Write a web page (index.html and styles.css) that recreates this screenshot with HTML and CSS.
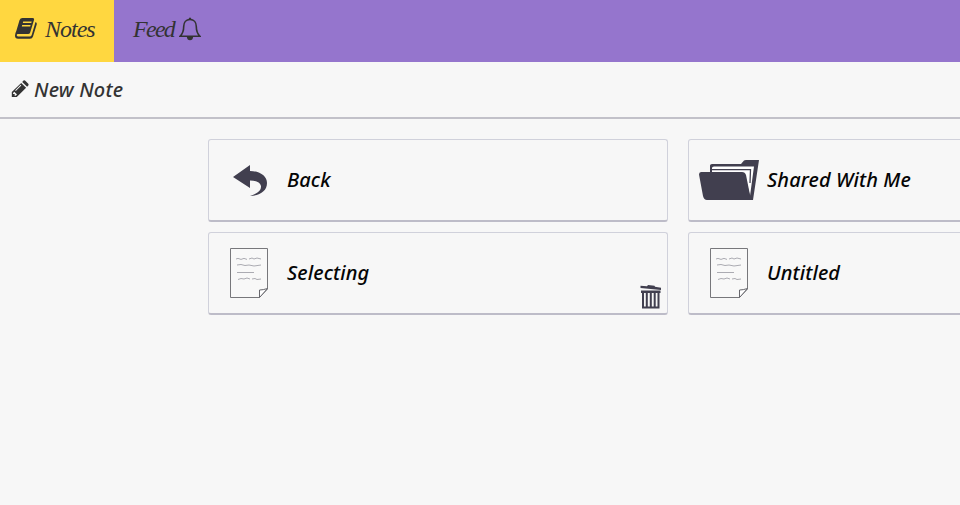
FILE: index.html
```html
<!DOCTYPE html>
<html lang="en">
<head>
<meta charset="utf-8">
<title>Notes</title>
<link rel="stylesheet" href="styles.css">
</head>
<body>
<svg class="defs" width="0" height="0">
  <symbol id="doc" viewBox="0 0 38 50">
    <path d="M.5.5H37.5V41L29.5 49.5H.5Z" fill="#f8f8f8" stroke="#77777b"/>
    <path d="M29.5 49.5V42Q33 42 37.5 40.5Z" fill="#fff" stroke="#66666c"/>
    <path d="M6 11l2-.6 3 1 3-1 3 1M19 11l3-1 2 1 3-1 4 1M7 17l4-.5 4 1 4-.5 5 1 7-1M7 24.500h17M8 31.500l3-1 3 .5 3-1 3 1M22 31l3-.5 2 1 4-.5" fill="none" stroke="#a2a2a9" stroke-width=".9"/>
  </symbol>
</svg>
<nav class="nav">
  <a class="tab tab-active">
    <svg class="book" width="22" height="21" viewBox="0 0 22 21">
      <path fill-rule="evenodd" d="M7.500 0H17.500Q19.500 0 19 2L15.200 14.500Q14.700 16 13 16H3Q1.700 16 1.700 17T3 18.500H14.500Q16.200 18.500 16.700 17L20.500 4Q22.200 4.800 21.700 6.500L18 18.500Q17.300 20.700 15 20.700H3Q0 20.700 0 17.500Q0 15.500 1.300 13L4.500 2.200Q5.300 0 7.500 0ZM8.200 3.500 7.800 5H16.300L16.700 3.500ZM7.200 7 6.800 8.500H15.200L15.600 7Z"/>
    </svg>
    <span class="label label-notes">Notes</span>
  </a>
  <a class="tab">
    <span class="label label-feed">Feed</span>
    <svg class="bell" width="22" height="24" viewBox="0 0 22 24">
      <path d="M11 2.500C7 2.500 4.700 5.500 4.700 9.500C4.700 14.500 3.500 17 1 19.300H21C18.500 17 17.300 14.500 17.300 9.500C17.300 5.500 15 2.500 11 2.500Z" fill="none" stroke="#333" stroke-width="1.600"/>
      <path d="M9.800 2.500V1.200Q11-.4 12.200 1.200V2.500ZM7.800 19.800H14.200Q13.800 23.300 11 23.300T7.800 19.800Z"/>
    </svg>
  </a>
</nav>
<div class="toolbar">
  <svg class="pencil" width="18" height="18" viewBox="0 0 18 18">
    <path fill-rule="evenodd" d="M10.200 2.900 15.100 7.800 5.800 17.100H.800V12.100ZM2.300 12.800 1.900 14.100H3.700V16L5 15.600 6 14.600 3.300 11.800ZM9.700 4.800 4.200 10.300 4.800 10.900 10.300 5.400ZM11.200 1.900 12.500.600Q13.500 0 14.300.700L17.300 3.700Q18 4.600 17.300 5.500L16.100 6.800Z"/>
  </svg>
  <span>New Note</span>
</div>
<main class="grid">
  <article class="card">
    <div class="thumb"><svg class="arrow" width="34" height="31" viewBox="0 0 34 31"><path d="M0 12 17 0V6C27 6 34 11 34 18C34 26 27 30.500 17 31C25 28.500 28.500 25 28 21C27 17 23 15.500 17 15.500V23Z" fill="#413f4f"/></svg></div>
    <h2>Back</h2>
  </article>
  <article class="card">
    <div class="thumb"><svg width="60" height="40" viewBox="0 0 60 40">
      <path d="M11 12V5.500Q11 4 13 4H42L45 .5Q45.500 0 47 0H60L54 40H45L50 7H15L13 12Z" fill="#413f4f"/>
      <path d="M13 12V8Q13 6.500 15 6.500H55L51 36 45 12Z" fill="#fff"/>
      <path d="M13 9.700H51.500L51 23" fill="none" stroke="#413f4f" stroke-width="1.300"/>
      <path d="M2 12H43Q46 12 47 15L51 35 54 40H8Q5 40 4 36L0 14.500Q0 12 2 12Z" fill="#413f4f"/>
    </svg></div>
    <h2>Shared With Me</h2>
  </article>
  <article class="card">
    <div class="thumb"><svg width="38" height="50"><use href="#doc"/></svg></div>
    <h2>Selecting</h2>
    <svg class="trash" width="22" height="24" viewBox="0 0 22 24">
      <path d="M.5.800 7 1.300 8 .100 14.500.7 15 1.700 21 2.700V5L.5 2.900ZM1 5.500H20.500V8H1Z" fill="#413f4f"/>
      <path d="M3 8V22.500H18.500V8M6.800 8V22M10.800 8V22M14.700 8V22" fill="none" stroke="#413f4f" stroke-width="2"/>
    </svg>
  </article>
  <article class="card">
    <div class="thumb"><svg width="38" height="50"><use href="#doc"/></svg></div>
    <h2>Untitled</h2>
  </article>
</main>
</body>
</html>
```
FILE: styles.css
```css
* { box-sizing: border-box; }
body {
  margin: 0;
  height: 505px;
  overflow: hidden;
  background: #f7f7f7;
  color: #333;
  font-family: "Noto Sans", "Open Sans", sans-serif;
}
svg { display: block; flex: none; fill: #333; }
.defs { position: absolute; }
.nav { display: flex; height: 62px; background: #9575cd; }
.tab { display: flex; align-items: flex-start; padding: 0 19px; }
.tab-active { width: 114px; padding: 0 0 0 15px; background: #ffd740; }
.book { margin-top: 18px; }
.bell { margin: 17px 0 0 6px; }
.label {
  margin-top: 15px;
  font: italic 24px/28px "Liberation Serif", serif;
  white-space: nowrap;
}
.label-notes { margin-left: 8px; letter-spacing: -1px; }
.label-feed { width: 40px; letter-spacing: -1.7px; }
.toolbar {
  display: flex;
  align-items: center;
  height: 57px;
  padding: 0 0 1px 11px;
  gap: 5px;
  border-bottom: 2px solid #c2c1c9;
  font-size: 20px;
  font-style: italic;
  font-weight: 500;
  letter-spacing: .2px;
}
.grid {
  display: grid;
  grid-template-columns: 460px 460px;
  grid-auto-rows: 83px;
  gap: 10px 20px;
  padding: 20px 0 0 208px;
  overflow: hidden;
}
.card {
  position: relative;
  display: flex;
  align-items: center;
  border: 1px solid #d0d1db;
  border-bottom: 2px solid #bdbcc8;
  border-radius: 3px;
}
.thumb { display: flex; justify-content: center; width: 78px; padding-left: 2px; }
.arrow { margin: 1px 0 0 1px; }
.card h2 {
  margin: 0;
  padding-bottom: 2px;
  color: #050505;
  font-size: 20px;
  font-style: italic;
  font-weight: 500;
  letter-spacing: .1px;
  white-space: nowrap;
}
.trash { position: absolute; right: 5px; bottom: 4px; }
```
